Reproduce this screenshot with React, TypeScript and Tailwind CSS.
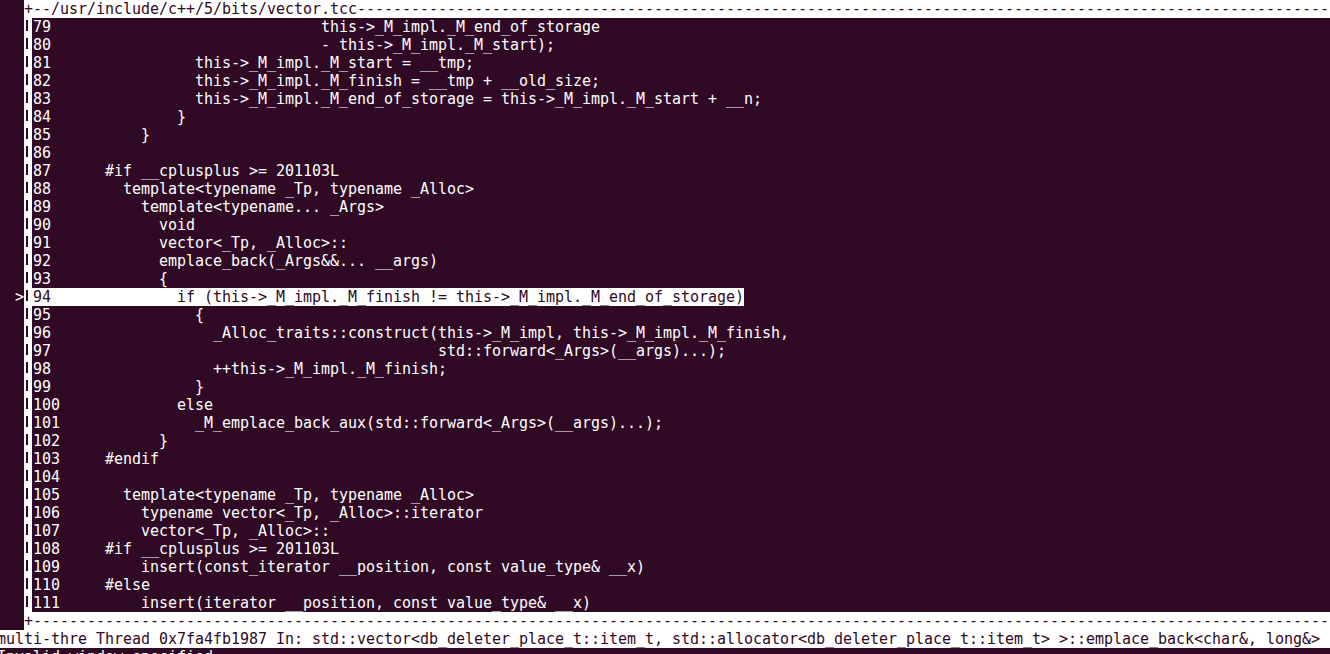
import React from 'react'

// gdb tui source window: 9px cells, 18px rows, column 0 sits at x = -3
const lines: [number, number, string][] = [
  [79, 24, 'this->_M_impl._M_end_of_storage'],
  [80, 24, '- this->_M_impl._M_start);'],
  [81, 10, 'this->_M_impl._M_start = __tmp;'],
  [82, 10, 'this->_M_impl._M_finish = __tmp + __old_size;'],
  [83, 10, 'this->_M_impl._M_end_of_storage = this->_M_impl._M_start + __n;'],
  [84, 8, '}'],
  [85, 4, '}'],
  [86, 0, ''],
  [87, 0, '#if __cplusplus >= 201103L'],
  [88, 2, 'template<typename _Tp, typename _Alloc>'],
  [89, 4, 'template<typename... _Args>'],
  [90, 6, 'void'],
  [91, 6, 'vector<_Tp, _Alloc>::'],
  [92, 6, 'emplace_back(_Args&&... __args)'],
  [93, 6, '{'],
  [94, 8, 'if (this->_M_impl._M_finish != this->_M_impl._M_end_of_storage)'],
  [95, 10, '{'],
  [96, 12, '_Alloc_traits::construct(this->_M_impl, this->_M_impl._M_finish,'],
  [97, 37, 'std::forward<_Args>(__args)...);'],
  [98, 12, '++this->_M_impl._M_finish;'],
  [99, 10, '}'],
  [100, 8, 'else'],
  [101, 10, '_M_emplace_back_aux(std::forward<_Args>(__args)...);'],
  [102, 6, '}'],
  [103, 0, '#endif'],
  [104, 0, ''],
  [105, 2, 'template<typename _Tp, typename _Alloc>'],
  [106, 4, 'typename vector<_Tp, _Alloc>::iterator'],
  [107, 4, 'vector<_Tp, _Alloc>::'],
  [108, 0, '#if __cplusplus >= 201103L'],
  [109, 4, 'insert(const_iterator __position, const value_type& __x)'],
  [110, 0, '#else'],
  [111, 4, 'insert(iterator __position, const value_type& __x)'],
]

const CURRENT = 94

const BorderRow = ({ text }: { text: string }) => (
  <div className="flex h-[18px]">
    <span className="w-[24px] shrink-0" />
    <span className="flex-1 bg-white text-[#300a24] whitespace-pre overflow-hidden">
      {text}
    </span>
  </div>
)

const SourceRow = ({ num, indent, code }: { num: number; indent: number; code: string }) => {
  const active = num === CURRENT
  const text = String(num).padEnd(8, ' ') + ' '.repeat(indent) + code
  return (
    <div className="flex h-[18px]">
      <span className="w-[15px] shrink-0" />
      <span className="w-[9px] shrink-0 whitespace-pre">{active ? '>' : ' '}</span>
      <span className="w-[8px] shrink-0 bg-white flex items-start pt-[2px]">
        <span className="ml-[2px] w-[2px] h-[11px] bg-[#300a24]" />
      </span>
      <span
        className={
          active
            ? 'pl-[1px] whitespace-pre bg-white text-[#300a24]'
            : 'pl-[1px] whitespace-pre'
        }
      >
        {text}
      </span>
    </div>
  )
}

export default function App() {
  return (
    <div className="w-[1330px] h-[654px] overflow-hidden bg-[#300a24] text-white font-['DejaVu_Sans_Mono','Liberation_Mono',monospace] text-[15px] tracking-[-0.03px] leading-[18px]">
      <BorderRow text={'+--/usr/include/c++/5/bits/vector.tcc' + '-'.repeat(140)} />
      {lines.map(([num, indent, code]) => (
        <SourceRow key={num} num={num} indent={indent} code={code} />
      ))}
      <BorderRow text={'+' + '-'.repeat(180)} />
      <div className="h-[18px] -ml-[3px] bg-white text-[#300a24] whitespace-pre">
        multi-thre Thread 0x7fa4fb1987 In: std::vector&lt;db_deleter_place_t::item_t, std::allocator&lt;db_deleter_place_t::item_t&gt; &gt;::emplace_back&lt;char&amp;, long&amp;&gt;
      </div>
      <div className="h-[18px] -ml-[3px] whitespace-pre">Invalid window specified.</div>
    </div>
  )
}
